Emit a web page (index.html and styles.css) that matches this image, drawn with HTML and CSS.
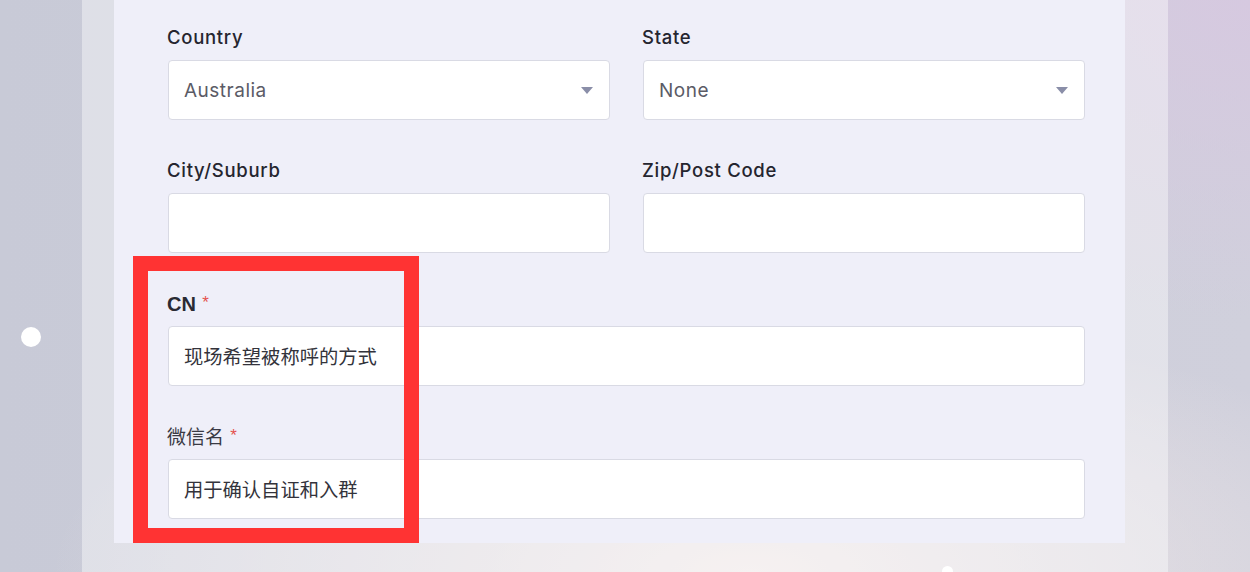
FILE: index.html
```html
<!DOCTYPE html>
<html lang="en">
<head>
    <meta charset="UTF-8">
    <meta name="viewport" content="width=device-width, initial-scale=1.0">
    <title>Registration - Address</title>
    <link rel="stylesheet" href="styles.css">
</head>
<body>
    <div class="dot dot-left"></div>
    <div class="dot dot-bottom"></div>

    <div class="frame">
        <form class="panel">
            <div class="row">
                <div class="field">
                    <label class="label">Country</label>
                    <div class="select">
                        <span>Australia</span>
                        <svg width="12" height="7" viewBox="0 0 12 7"><path d="M0 0h12L6 7z" fill="#8a8ea8"/></svg>
                    </div>
                </div>
                <div class="field">
                    <label class="label">State</label>
                    <div class="select">
                        <span>None</span>
                        <svg width="12" height="7" viewBox="0 0 12 7"><path d="M0 0h12L6 7z" fill="#8a8ea8"/></svg>
                    </div>
                </div>
            </div>

            <div class="row">
                <div class="field">
                    <label class="label">City/Suburb</label>
                    <input class="input" type="text">
                </div>
                <div class="field">
                    <label class="label">Zip/Post Code</label>
                    <input class="input" type="text">
                </div>
            </div>

            <div class="field">
                <label class="label label-cn"><b>CN</b> <span class="req">*</span></label>
                <input class="input input-cn" type="text" placeholder="现场希望被称呼的方式">
            </div>

            <div class="field">
                <label class="label label-cn">微信名 <span class="req">*</span></label>
                <input class="input input-cn" type="text" placeholder="用于确认自证和入群">
            </div>
        </form>
    </div>

    <div class="highlight"></div>
</body>
</html>
```

FILE: styles.css
```css
body {
    margin: 0;
    padding: 0;
    height: 572px;
    overflow: hidden;
    position: relative;
    font-family: Inter, "Noto Sans", sans-serif;
    background:
        radial-gradient(ellipse 420px 320px at 100% 0%, #d6c9e0 0%, rgba(214, 201, 224, 0) 100%),
        radial-gradient(ellipse 700px 260px at 60% 100%, #f0e8e8 0%, rgba(240, 232, 232, 0) 100%),
        linear-gradient(90deg, #c8cad7 0%, #d0d0dc 100%);
}

.frame {
    margin-left: 82px;
    width: 1086px;
    height: 572px;
    box-sizing: border-box;
    padding: 0 43px 0 32px;
    background: rgba(255, 255, 255, 0.4);
}

.panel {
    background: #efeff9;
    padding: 25px 40px 24px 54px;
    display: flex;
    flex-direction: column;
    gap: 38px;
}

.row {
    display: grid;
    grid-template-columns: 1fr 1fr;
    gap: 33px;
}

.field {
    display: flex;
    flex-direction: column;
    gap: 11px;
}

.label {
    display: block;
    height: 24px;
    line-height: 24px;
    font-size: 18.5px;
    font-weight: 500;
    letter-spacing: 0.7px;
    color: #25252f;
    margin-left: -1px;
}

.label-cn {
    font-family: "Liberation Sans", "Noto Sans CJK SC", sans-serif;
    font-size: 19px;
    font-weight: 400;
    letter-spacing: 0;
    color: #3a3a44;
}

.label-cn b {
    font-size: 20px;
    font-weight: 700;
    color: #2a2a33;
}

.req {
    color: #e4524f;
    font-size: 17px;
    margin-left: 1px;
    vertical-align: 3px;
}

.select,
.input {
    box-sizing: border-box;
    height: 60px;
    width: 100%;
    margin: 0;
    background: #fff;
    border: 1px solid #d9dae4;
    border-radius: 4px;
    padding: 0 15px;
    font-family: Inter, "Noto Sans", sans-serif;
    font-size: 19px;
    letter-spacing: 0.5px;
    color: #5b5b66;
    outline: none;
}

.select {
    display: flex;
    align-items: center;
    justify-content: space-between;
}

.select svg {
    margin-right: 1px;
}

.input-cn {
    font-family: "Noto Sans CJK SC", sans-serif;
    font-size: 19.3px;
    letter-spacing: 0;
}

.input-cn::placeholder {
    color: #33333b;
    opacity: 1;
}

.dot {
    position: absolute;
    background: #fff;
    border-radius: 50%;
}

.dot-left {
    left: 21px;
    top: 327px;
    width: 20px;
    height: 20px;
}

.dot-bottom {
    left: 942px;
    top: 566px;
    width: 11px;
    height: 11px;
}

.highlight {
    position: absolute;
    left: 133px;
    top: 256px;
    width: 286px;
    height: 287px;
    box-sizing: border-box;
    border: 15px solid #ff3333;
}
```
